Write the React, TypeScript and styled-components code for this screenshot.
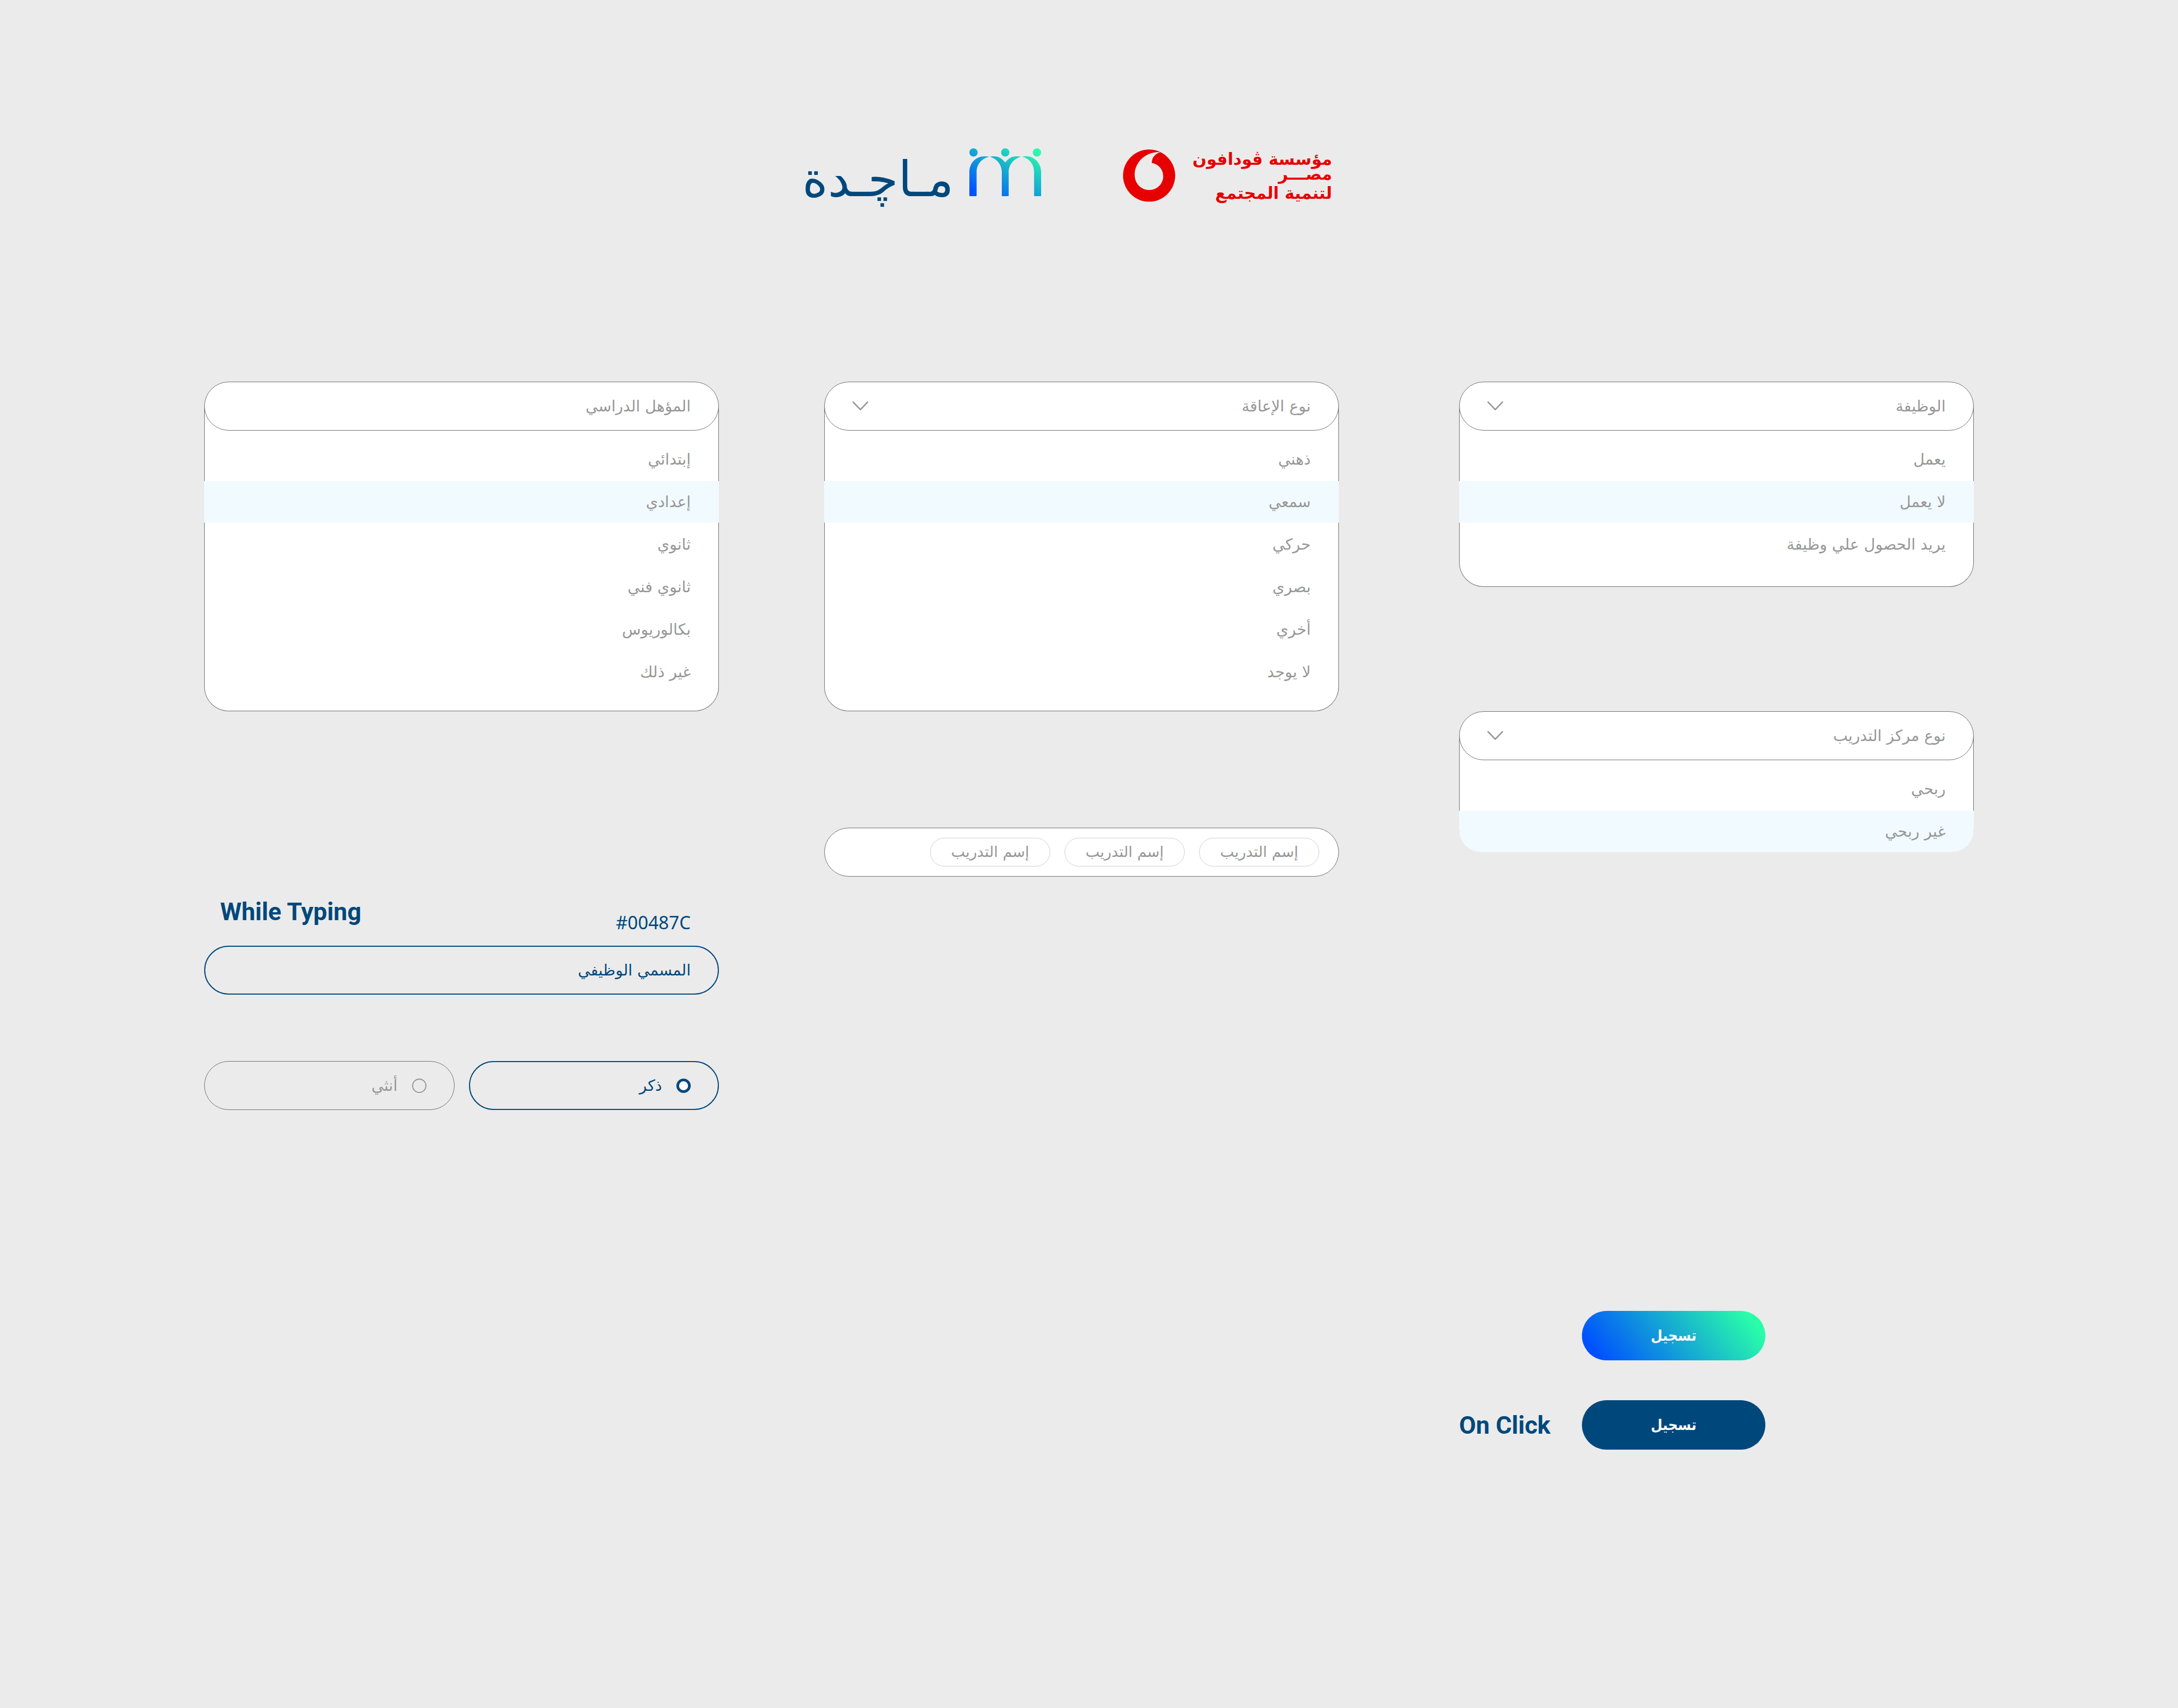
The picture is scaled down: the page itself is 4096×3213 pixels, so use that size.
import React, { useId, useState } from "react";
import styled, { createGlobalStyle, css } from "styled-components";

const navy = "#00487c";
const muted = "#979797";
const line = "#707070";
const arabic = `"DejaVu Sans", sans-serif`;
const arabicNarrow = `"DejaVu Sans Condensed", "DejaVu Sans", sans-serif`;
const latin = `"Noto Sans", "Open Sans", sans-serif`;

const GlobalStyle = createGlobalStyle`
  *, *::before, *::after { box-sizing: border-box; }
  body { margin: 0; background: #ebebeb; font-family: ${arabic}; }
  button, input { font-family: inherit; margin: 0; }
  h1, h2, p, ul, fieldset { margin: 0; padding: 0; border: 0; }
`;

const Page = styled.div`
  min-height: 100vh;
  padding: 279px 384px 240px;
`;

const Brands = styled.header`
  display: flex;
  justify-content: center;
  align-items: flex-start;
  gap: 154px;
  height: 439px;
  padding-right: 82px;
`;

const Brand = styled.div<{ $gap: number }>`
  display: flex;
  align-items: flex-start;
  gap: ${(p) => p.$gap}px;
`;

const Wordmark = styled.h1`
  color: ${navy};
  font-size: 92px;
  font-weight: 400;
  line-height: 118px;
  white-space: nowrap;
`;

const FoundationName = styled.div`
  color: #e60000;
  font-size: 31px;
  font-weight: 700;
  line-height: 28px;
  white-space: nowrap;
  padding-top: 6px;

  p:last-child { margin-top: 8px; }
`;

const Columns = styled.main`
  display: flex;
  align-items: flex-start;
  gap: 198px;
`;

const Column = styled.section<{ $inset?: number }>`
  flex: 1;
  min-width: 0;
  margin-left: ${(p) => p.$inset ?? 0}px;
`;

const Block = styled.div<{ $top: number }>`
  margin-top: ${(p) => p.$top}px;
`;

const pill = css`
  width: 100%;
  height: 92px;
  border-radius: 46px;
  border: 1px solid ${line};
`;

const DropField = styled.button`
  ${pill}
  position: relative;
  z-index: 1;
  display: flex;
  align-items: center;
  justify-content: space-between;
  padding: 0 52px;
  background: #fff;
  color: ${muted};
  font-size: 29px;
  line-height: 40px;
  cursor: pointer;
`;

const DropInput = styled.input`
  ${pill}
  display: block;
  position: relative;
  z-index: 1;
  padding: 0 52px;
  background: #fff;
  color: ${muted};
  font-size: 29px;
  line-height: 40px;

  &::placeholder { color: ${muted}; opacity: 1; }
`;

const Options = styled.ul<{ $tail: number }>`
  display: flex;
  flex-direction: column;
  gap: 2px;
  margin-top: -46px;
  padding: 61px 0 ${(p) => p.$tail}px;
  list-style: none;
  background: #fff;
  border: 1px solid ${line};
  border-top: 0;
  border-bottom-width: ${(p) => (p.$tail ? 1 : 0)}px;
  border-radius: 0 0 46px 46px;
`;

const Option = styled.li<{ $on: boolean; $last: boolean }>`
  height: 78px;
  margin: 0 -1px;
  padding: 0 53px;
  border-radius: ${(p) => (p.$last ? "0 0 42px 42px" : "0")};
  background: ${(p) => (p.$on ? "#f1faff" : "transparent")};
  color: ${muted};
  font-size: 29px;
  line-height: 78px;
  cursor: pointer;
`;

const TagField = styled.div`
  ${pill}
  display: flex;
  align-items: center;
  gap: 27px;
  padding: 0 36px;
  background: #fff;
`;

const Tag = styled.span`
  display: flex;
  align-items: center;
  justify-content: center;
  width: 226px;
  height: 54px;
  border: 1px solid #cfcfcf;
  border-radius: 27px;
  color: ${muted};
  font-size: 28px;
  line-height: 40px;
`;

const Caption = styled.div`
  display: flex;
  align-items: flex-end;
  justify-content: space-between;
  padding: 0 53px 0 30px;
  color: ${navy};
  font-family: ${latin};
`;

const Heading = styled.h2<{ $lift?: number }>`
  padding-bottom: ${(p) => p.$lift ?? 0}px;
  color: ${navy};
  font-family: Roboto, sans-serif;
  font-size: 46px;
  font-weight: 700;
  line-height: 54px;
  white-space: nowrap;
`;

const Code = styled.label`
  font-size: 34px;
  line-height: 40px;
`;

const TextInput = styled.input`
  ${pill}
  display: block;
  margin-top: 24px;
  padding: 0 51px;
  border: 2px solid ${navy};
  background: transparent;
  color: ${navy};
  font-size: 29px;
  line-height: 40px;
  outline: none;
`;

const RadioGroup = styled.fieldset`
  display: flex;
  gap: 27px;
  margin-top: 125px;
`;

const RadioCard = styled.label<{ $on: boolean }>`
  ${pill}
  flex: 1;
  display: flex;
  align-items: center;
  gap: 27px;
  padding: 0 ${(p) => (p.$on ? 51 : 52)}px;
  border: ${(p) => (p.$on ? `2px solid ${navy}` : `1px solid ${line}`)};
  color: ${(p) => (p.$on ? navy : muted)};
  font-size: 29px;
  line-height: 40px;
  cursor: pointer;
`;

const Radio = styled.input`
  appearance: none;
  width: 27px;
  height: 27px;
  border: 2px solid ${muted};
  border-radius: 50%;

  &:checked {
    border: 5px solid ${navy};
    background: #fff;
  }
`;

const Actions = styled.div`
  display: grid;
  grid-template-columns: 231px 345px;
  row-gap: 75px;
  align-items: center;
  margin-top: 863px;
`;

const Submit = styled.button<{ $pressed?: boolean }>`
  grid-column: 2;
  height: 93px;
  border: 0;
  border-radius: 47px;
  background: ${(p) =>
    p.$pressed ? navy : "linear-gradient(52deg, #0050ff 8%, #2affa8 92%)"};
  color: #fff;
  font-family: ${arabicNarrow};
  font-size: 28px;
  font-weight: 700;
  line-height: 40px;
  cursor: pointer;
`;

function Chevron() {
  return (
    <svg width="30" height="18" viewBox="0 0 30 18" fill="none" aria-hidden="true">
      <path d="M1.5 1.5 15 15.5 28.5 1.5" stroke={muted} strokeWidth="2.6" strokeLinecap="round" strokeLinejoin="round" />
    </svg>
  );
}

function PeopleMark() {
  return (
    <svg width="135" height="90" viewBox="0 0 151.5 101" aria-hidden="true">
      <defs>
        <linearGradient id="people" gradientUnits="userSpaceOnUse" x1="6" y1="92" x2="88" y2="-33">
          <stop offset="0" stopColor="#0050ff" />
          <stop offset="1" stopColor="#2affa8" />
        </linearGradient>
      </defs>
      <g fill="url(#people)">
        <circle cx="8.8" cy="8.8" r="8.7" />
        <circle cx="75.8" cy="8.8" r="8.7" />
        <circle cx="142.7" cy="8.8" r="8.7" />
        <path d="M0 100V50C0 31 14 16.7 32 16.7C36 16.7 39 17 41.7 18C27 21 15.3 33 15.3 50V100Q15.3 101 14.3 101H1Q0 101 0 100Z" />
        <path d="M68.5 100V50C68.5 34 57 21 42.9 18C46 17 48 16.7 51.7 16.7C62 16.7 70 22 75.8 30C81.5 22 89 16.7 99.5 16.7C103 16.7 106 17 109 18C95 21 83 34 83 50V100Q83 101 82 101H69.5Q68.5 101 68.5 100Z" />
        <path d="M136.6 100V50C136.6 33 126 21 111.4 18C114 17 117 16.7 120.6 16.7C138 16.7 151.5 32 151.5 50V100Q151.5 101 150.5 101H137.6Q136.6 101 136.6 100Z" />
      </g>
    </svg>
  );
}

function SpeechMark() {
  return (
    <svg width="98" height="98" viewBox="86 100 332 332" aria-hidden="true" overflow="visible">
      <path
        fill="#e60000"
        fillRule="evenodd"
        d="M252 108A166 166 0 1 0 252 440A166 166 0 1 0 252 108ZM326 124C232 118 160 188 160 268C160 325 201 366 252 366C304 366 342 326 342 278C342 235 312 200 269 193C269 161 290 134 326 124Z"
      />
    </svg>
  );
}

type DropdownProps = {
  label: string;
  options: string[];
  initial: number;
  tail: number;
  editable?: boolean;
};

function Dropdown({ label, options, initial, tail, editable }: DropdownProps) {
  const [current, setCurrent] = useState(initial);
  const listId = useId();
  return (
    <div dir="rtl">
      {editable ? (
        <DropInput type="text" role="combobox" aria-expanded="true" aria-controls={listId} aria-label={label} placeholder={label} />
      ) : (
        <DropField type="button" aria-haspopup="listbox" aria-expanded="true" aria-controls={listId}>
          <span>{label}</span>
          <Chevron />
        </DropField>
      )}
      <Options id={listId} role="listbox" aria-label={label} $tail={tail}>
        {options.map((text, i) => (
          <Option
            key={text}
            role="option"
            aria-selected={i === current}
            $on={i === current}
            $last={tail === 0 && i === options.length - 1}
            onClick={() => setCurrent(i)}
          >
            {text}
          </Option>
        ))}
      </Options>
    </div>
  );
}

export default function App() {
  const [gender, setGender] = useState("ذكر");
  const [title, setTitle] = useState("المسمي الوظيفي");
  const tags = ["إسم التدريب", "إسم التدريب", "إسم التدريب"];

  return (
    <Page>
      <GlobalStyle />
      <Brands>
        <Brand $gap={30}>
          <Wordmark dir="rtl" lang="ar">مـاچـدة</Wordmark>
          <PeopleMark />
        </Brand>
        <Brand $gap={32}>
          <SpeechMark />
          <FoundationName dir="rtl" lang="ar">
            <p>مؤسسة ڤودافون</p>
            <p>مصـــر</p>
            <p>لتنمية المجتمع</p>
          </FoundationName>
        </Brand>
      </Brands>

      <Columns lang="ar">
        <Column>
          <Dropdown
            editable
            label="المؤهل الدراسي"
            options={["إبتدائي", "إعدادي", "ثانوي", "ثانوي فني", "بكالوريوس", "غير ذلك"]}
            initial={1}
            tail={34}
          />
          <Block $top={350}>
            <Caption>
              <Heading $lift={13}>While Typing</Heading>
              <Code htmlFor="job-title">#00487C</Code>
            </Caption>
            <TextInput id="job-title" type="text" dir="rtl" value={title} onChange={(e) => setTitle(e.target.value)} />
            <RadioGroup dir="rtl">
              {["ذكر", "أنثي"].map((g) => (
                <RadioCard key={g} $on={gender === g}>
                  <Radio type="radio" name="gender" checked={gender === g} onChange={() => setGender(g)} />
                  {g}
                </RadioCard>
              ))}
            </RadioGroup>
          </Block>
        </Column>

        <Column>
          <Dropdown
            label="نوع الإعاقة"
            options={["ذهني", "سمعي", "حركي", "بصري", "أخري", "لا يوجد"]}
            initial={1}
            tail={34}
          />
          <Block $top={219}>
            <TagField dir="rtl">
              {tags.map((tag, i) => (
                <Tag key={i}>{tag}</Tag>
              ))}
            </TagField>
          </Block>
        </Column>

        <Column $inset={28}>
          <Dropdown
            label="الوظيفة"
            options={["يعمل", "لا يعمل", "يريد الحصول علي وظيفة"]}
            initial={1}
            tail={40}
          />
          <Block $top={234}>
            <Dropdown label="نوع مركز التدريب" options={["ربحي", "غير ربحي"]} initial={1} tail={0} />
          </Block>
          <Actions>
            <Submit type="button">تسجيل</Submit>
            <Heading>On Click</Heading>
            <Submit type="button" $pressed>تسجيل</Submit>
          </Actions>
        </Column>
      </Columns>
    </Page>
  );
}
